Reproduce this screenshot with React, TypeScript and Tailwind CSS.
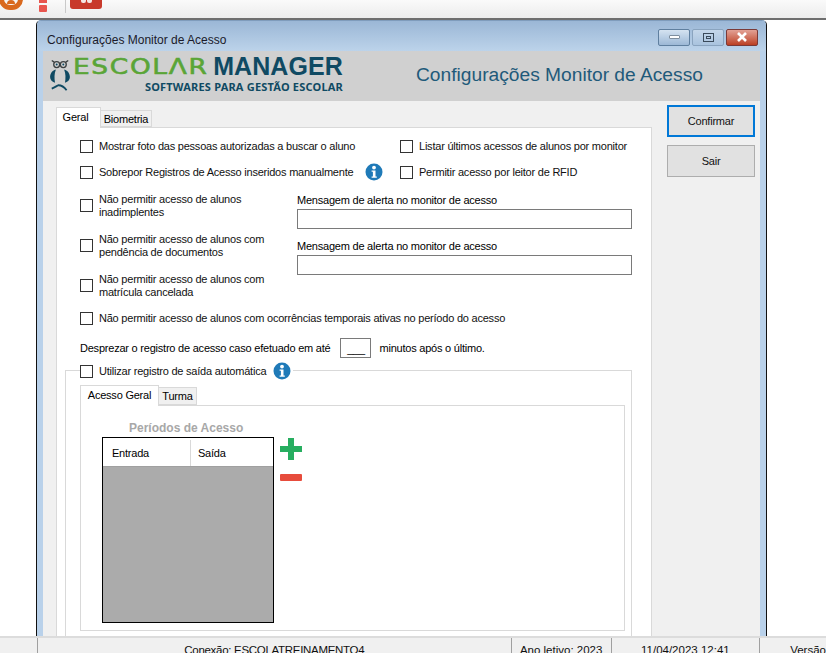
import { ReactNode } from "react";

const font = { fontFamily: '"Liberation Sans", Arial, sans-serif' };

const Check = ({ children, className = "" }: { children: ReactNode; className?: string }) => (
  <label className={`flex items-center gap-[6px] ${className}`}>
    <span className="h-[13px] w-[13px] shrink-0 border border-[#333333] bg-white" />
    <span className="pt-px leading-[13px] text-[#111111]">{children}</span>
  </label>
);

const InfoIcon = () => (
  <svg viewBox="0 0 18 18" className="h-[18px] w-[18px] shrink-0">
    <circle cx="9" cy="9" r="8.5" fill="#1f7ab8" />
    <circle cx="9" cy="4.6" r="1.9" fill="#fff" />
    <path d="M6.6 7.4h3.9v6h1.3v1.4H6.6v-1.4h1.3V8.8H6.6z" fill="#fff" />
  </svg>
);

const Owl = () => (
  <svg viewBox="0 0 24 40" className="h-[33px] w-[20px] shrink-0">
    <circle cx="8" cy="8" r="3.6" fill="none" stroke="#3b3f40" strokeWidth="1.6" />
    <circle cx="16" cy="8" r="3.6" fill="none" stroke="#3b3f40" strokeWidth="1.6" />
    <circle cx="8" cy="8" r="1.2" fill="#0f4a63" />
    <circle cx="16" cy="8" r="1.2" fill="#0f4a63" />
    <path d="M2 3l3 2M22 3l-3 2" stroke="#3b3f40" strokeWidth="1.6" />
    <path d="M7 14C2 15 0 20 0 23c0 3 2 6 6 7 -1-5-1-11 1-16z" fill="#0f4a63" />
    <path d="M17 14c5 1 7 6 7 9 0 3-2 6-6 7 1-5 1-11-1-16z" fill="#0f4a63" />
    <path d="M2 37c3-1 6-3 8-4 3 0 7 2 10 6" fill="none" stroke="#0f4a63" strokeWidth="2.2" />
  </svg>
);

const WindowButton = ({ className, children }: { className: string; children: ReactNode }) => (
  <div className={`flex h-[17px] w-[32px] items-center justify-center rounded-[2px] border ${className}`}>{children}</div>
);

export default function App() {
  return (
    <div className="flex h-[653px] w-[826px] flex-col overflow-hidden bg-white text-[11px] tracking-[-0.22px]" style={font}>
      {/* Barra superior */}
      <div className="flex h-[20px] shrink-0 items-start border-b-2 border-[#6e6e6e] bg-gradient-to-b from-[#fafafa] to-[#ececec]">
        <div className="-mt-[12px] -ml-[1px] flex h-[22px] w-[24px] items-end justify-center rounded-full border-[5px] border-[#d9691e] bg-[#f6f6f6]">
          <div className="mb-[1px] h-[4px] w-[8px] rounded-t-full bg-[#d9691e]" />
        </div>
        <div className="ml-[16px] flex w-[8px] flex-col items-center">
          <div className="h-[3px] w-[8px] bg-[#e8554e]" />
          <div className="mt-[2px] h-[7px] w-[8px] rounded-[1px] bg-[#e8554e]" />
        </div>
        <div className="ml-[18px] h-[13px] w-px bg-[#c9c9c9]" />
        <div className="ml-[4px] flex h-[9px] w-[32px] items-start justify-center gap-[1px] rounded-b-[3px] bg-[#c8392b]">
          <div className="h-[3px] w-[5px] rounded-b-[2px] bg-[#f5e6e4]" />
          <div className="h-[3px] w-[5px] rounded-b-[2px] bg-[#f5e6e4]" />
        </div>
      </div>

      <div className="flex min-h-0 flex-1 pl-[36px]">
        {/* Janela */}
        <div className="flex h-[616px] w-[731px] flex-col rounded-t-[5px] border border-b-0 border-[#111111] border-t-[#7f9cbc] bg-[#b9d1ea] px-[6px]">
          <div className="-mx-[6px] flex h-[30px] shrink-0 items-center justify-between rounded-t-[4px] bg-gradient-to-b from-[#9bb7d6] to-[#bcd3ea] pr-[8px] pl-[10px]">
            <span className="pt-[7px] text-[12px] tracking-normal text-[#1a1a2a]">Configurações Monitor de Acesso</span>
            <div className="flex gap-[2px] pt-[2px]">
              <WindowButton className="border-[#5f7f9f] bg-gradient-to-b from-[#d5e3f1] to-[#9cb8d6]">
                <div className="h-[4px] w-[11px] rounded-[1px] border border-[#7f8f9f] bg-white" />
              </WindowButton>
              <WindowButton className="border-[#8aa4bf] bg-gradient-to-b from-[#c5d7ea] to-[#a9c3de]">
                <div className="flex h-[9px] w-[11px] items-center justify-center border border-[#3a4a5a]">
                  <div className="h-[3px] w-[5px] border border-[#3a4a5a]" />
                </div>
              </WindowButton>
              <WindowButton className="border-[#7a3a38] bg-gradient-to-b from-[#e2a195] to-[#bb3f22]">
                <svg viewBox="0 0 12 10" className="h-[10px] w-[12px]">
                  <path d="M2 1l8 8M10 1l-8 8" stroke="#fff" strokeWidth="2.6" />
                </svg>
              </WindowButton>
            </div>
          </div>

          {/* Cabeçalho */}
          <div className="flex h-[50px] shrink-0 items-start bg-[#d0d0d0]">
            <div className="mt-[7px] ml-[7px]">
              <Owl />
            </div>
            <div className="mt-[3px] ml-[3px] flex w-[270px] flex-col items-end">
              <div className="flex h-[25px] w-full items-center">
                <span
                  className="w-[141px] origin-left scale-x-[1.2] text-[22px] leading-[25px] tracking-[1.4px] text-[#5aa537] [-webkit-text-stroke:0.6px_#5aa537]"
                  style={{ fontFamily: '"DejaVu Sans", sans-serif' }}
                >
                  ESCOLΛR
                </span>
                <span className="text-[25px] leading-[25px] font-bold tracking-[0.1px] text-[#0f4a63]">MANAGER</span>
              </div>
              <span className="mt-[1px] text-[11px] leading-[14px] font-bold tracking-[0.2px] text-[#0f4a63]" style={{ fontFamily: '"Noto Sans", sans-serif' }}>
                SOFTWARES PARA GESTÃO ESCOLAR
              </span>
            </div>
            <span className="mt-[13px] ml-[73px] text-[19.2px] leading-[22px] tracking-normal text-[#1f5a7a]">Configurações Monitor de Acesso</span>
          </div>

          {/* Conteúdo */}
          <div className="flex min-h-0 flex-1 overflow-hidden bg-[#f0f0f0] pl-[13px]">
            <div className="flex w-[596px] flex-col">
              <div className="flex h-[26px] shrink-0 items-end">
                <div className="relative z-10 -mb-px flex h-[21px] w-[45px] items-center justify-center border border-b-0 border-[#d9d9d9] bg-white pr-[6px] pb-[2px]">Geral</div>
                <div className="flex h-[17px] w-[51px] items-center justify-center border border-l-0 border-[#d9d9d9] bg-[#f0f0f0] pt-px">Biometria</div>
              </div>

              <div className="flex-1 border border-b-0 border-[#d9d9d9] bg-white">
                <div className="pl-[23px]">
                  <div className="mt-[5px] flex h-[26px] items-center">
                    <Check className="w-[320px]">Mostrar foto das pessoas autorizadas a buscar o aluno</Check>
                    <Check>Listar últimos acessos de alunos por monitor</Check>
                  </div>
                  <div className="flex h-[26px] items-center">
                    <Check className="w-[285px]">Sobrepor Registros de Acesso inseridos manualmente</Check>
                    <div className="w-[35px]">
                      <InfoIcon />
                    </div>
                    <Check>Permitir acesso por leitor de RFID</Check>
                  </div>

                  <div className="flex">
                    <div className="w-[217px]">
                      <Check className="h-[40px]">
                        Não permitir acesso de alunos
                        <br />
                        inadimplentes
                      </Check>
                      <Check className="h-[40px]">
                        Não permitir acesso de alunos com
                        <br />
                        pendência de documentos
                      </Check>
                      <Check className="h-[40px]">
                        Não permitir acesso de alunos com
                        <br />
                        matrícula cancelada
                      </Check>
                    </div>
                    <div className="w-[335px] pt-[7px]">
                      <div className="h-[15px] pt-px leading-[15px]">Mensagem de alerta no monitor de acesso</div>
                      <div className="mt-[2px] h-[20px] border border-[#7a7a7a] bg-white" />
                      <div className="mt-[9px] h-[15px] pt-px leading-[15px]">Mensagem de alerta no monitor de acesso</div>
                      <div className="mt-[2px] h-[20px] border border-[#7a7a7a] bg-white" />
                    </div>
                  </div>

                  <Check className="h-[26px]">Não permitir acesso de alunos com ocorrências temporais ativas no período do acesso</Check>

                  <div className="mt-[4px] flex h-[26px] items-center">
                    <span>Desprezar o registro de acesso caso efetuado em até</span>
                    <div className="mr-[8px] ml-[10px] flex h-[20px] w-[31px] items-center justify-center border border-[#7a7a7a] pt-[2px]">___</div>
                    <span>minutos após o último.</span>
                  </div>
                </div>

                {/* Registro de saída automática */}
                <div className="mt-[9px] ml-[8px] h-[300px] w-[567px] border border-[#d9d9d9]">
                  <div className="-mt-[10px] ml-[14px] flex h-[20px] w-fit items-center gap-[7px] bg-white pr-[2px]">
                    <Check>Utilizar registro de saída automática</Check>
                    <InfoIcon />
                  </div>
                  <div className="mt-[3px] ml-[14px] w-[545px]">
                    <div className="flex h-[21px] items-end">
                      <div className="relative z-10 -mb-px flex h-[21px] w-[79px] items-center justify-center border border-b-0 border-[#d9d9d9] bg-white pb-[2px]">Acesso Geral</div>
                      <div className="flex h-[18px] w-[38px] items-center justify-center border border-l-0 border-[#d9d9d9] bg-[#f0f0f0] pt-px">Turma</div>
                    </div>
                    <div className="flex h-[226px] items-start border border-[#d9d9d9] pt-[13px] pl-[21px]">
                      <div className="w-[172px]">
                        <div className="h-[18px] pl-[27px] text-[12px] leading-[18px] font-bold tracking-normal text-[#a8a8a8]">Períodos de Acesso</div>
                        <div className="flex h-[186px] flex-col border border-black bg-[#ababab]">
                          <div className="flex h-[29px] shrink-0 items-center border-b border-[#a0a0a0] bg-white pt-[2px]">
                            <div className="flex h-full w-[88px] items-center border-r border-[#d9d9d9] pl-[9px]">Entrada</div>
                            <div className="pl-[7px]">Saída</div>
                          </div>
                        </div>
                      </div>
                      <div className="ml-[6px] flex flex-col pt-[19px]">
                        <svg viewBox="0 0 22 22" className="h-[22px] w-[22px]">
                          <path d="M8 0h6v8h8v6h-8v8H8v-8H0V8h8z" fill="#27ae60" />
                        </svg>
                        <div className="mt-[14px] h-[7px] w-[22px] rounded-[1px] bg-[#e74c3c]" />
                      </div>
                    </div>
                  </div>
                </div>
              </div>
            </div>

            {/* Botões */}
            <div className="ml-[15px] flex flex-col gap-[8px] pt-[4px]">
              <button className="h-[32px] w-[88px] border-2 border-[#0078d7] bg-[#e1e1e1] pt-px text-[#111111]">Confirmar</button>
              <button className="h-[32px] w-[88px] border border-[#adadad] bg-[#e1e1e1] pt-px text-[#111111]">Sair</button>
            </div>
          </div>
        </div>
      </div>

      {/* Barra de status */}
      <div className="flex h-[17px] shrink-0 border-t-2 border-[#dcdcdc] bg-[#f0f0f0] text-[11.5px] leading-[24px] tracking-normal text-[#111111]">
        <div className="w-[38px] border-r border-[#a0a0a0]" />
        <div className="w-[475px] border-r border-[#a0a0a0] text-center tracking-[-0.3px]">Conexão: ESCOLATREINAMENTO4</div>
        <div className="w-[100px] border-r border-[#a0a0a0] text-center">Ano letivo: 2023</div>
        <div className="w-[149px] border-r border-[#a0a0a0] text-center">11/04/2023 12:41</div>
        <div className="pl-[30px]">Versão</div>
      </div>
    </div>
  );
}
